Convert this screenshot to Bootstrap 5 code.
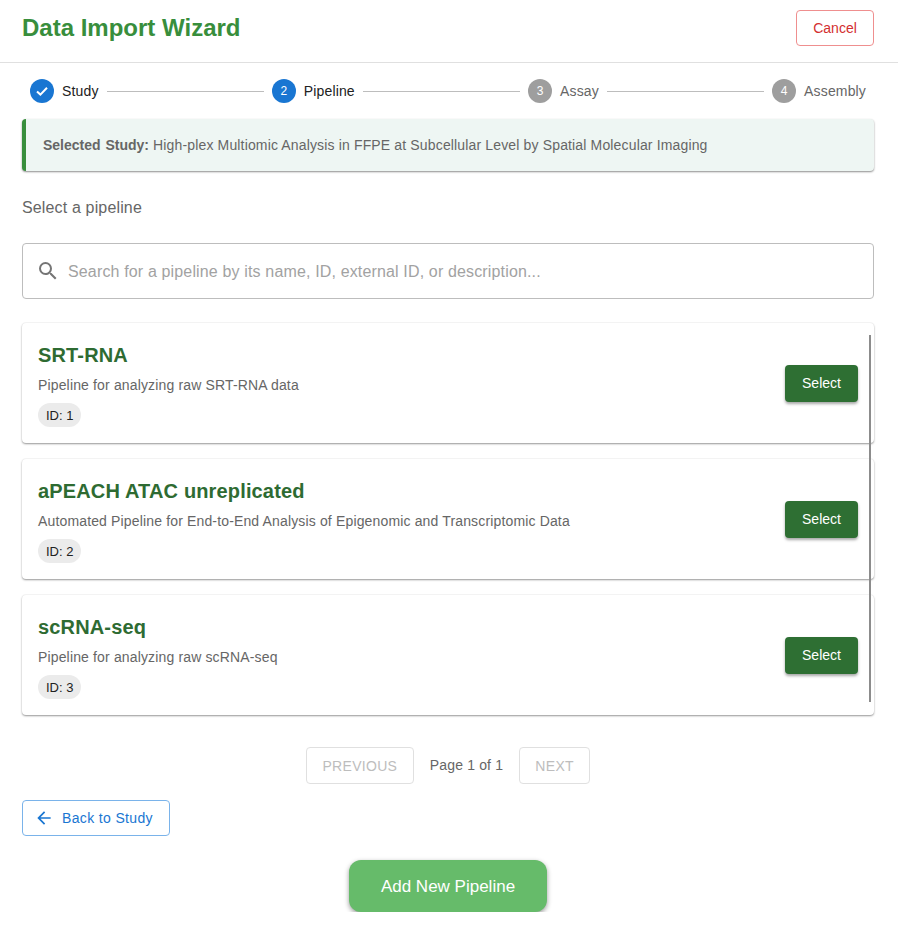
<!DOCTYPE html>
<html lang="en">
<head>
  <meta charset="UTF-8">
  <meta name="viewport" content="width=device-width,initial-scale=1">
  <title>Data Import Wizard</title>
  <link href="https://cdn.jsdelivr.net/npm/bootstrap@5.3.3/dist/css/bootstrap.min.css" rel="stylesheet">
  <style>
    body { background: #fff; font-family: "Liberation Sans", Arial, sans-serif; color: #666; font-size: 14px; letter-spacing: .15px; }
    .wiz-head { height: 63px; padding: 10px 24px 0 22px; border-bottom: 1px solid #e0e0e0; }
    .wiz-title { font-size: 24px; line-height: 36px; font-weight: 700; color: #388e3c; margin: 0; letter-spacing: 0; }
    .btn-cancel { width: 78px; height: 36px; padding: 0; font-size: 14px; line-height: 34px; color: #d32f2f; border: 1px solid #ef8f8f; border-radius: 4px; background: #fff; }
    .wiz-body { padding: 0 24px 0 22px; }
    .stepper { height: 56px; padding: 0 8px; }
    .step-dot { width: 24px; height: 24px; border-radius: 50%; font-size: 12px; letter-spacing: 0; color: #fff; background: #9e9e9e; flex: none; }
    .step-dot.on { background: #1976d2; }
    .step-text { margin-left: 8px; color: #666; white-space: nowrap; }
    .step-text.on { color: #212121; }
    .step-line { flex: 1; height: 1px; background: #bdbdbd; margin: 0 8px; }
    .study-box { height: 52px; padding-left: 17px; background: #eef6f3; border-left: 4px solid #388e3c; border-radius: 4px; box-shadow: 0 1px 2px rgba(0,0,0,.45); color: #666; }
    .study-box b { letter-spacing: 0; word-spacing: 1px; }
    .pick-label { font-size: 16px; line-height: 24px; margin: 25px 0 23px; color: #666; }
    .search-box { height: 56px; border: 1px solid #bdbdbd; border-radius: 4px; padding-left: 13px; }
    .search-box input { border: 0; outline: 0; flex: 1; font-size: 16px; letter-spacing: .15px; margin-left: 6px; padding-top: 3px; color: #333; background: transparent; font-family: inherit; }
    .search-box input::placeholder { color: #a2a2a2; opacity: 1; }
    .pipe-list { position: relative; margin-top: 24px; }
    .pipe-list .pipe-bar { position: absolute; right: 3px; top: 12px; bottom: 13px; width: 2px; background: #8c8c8c; }
    .pipe-item { height: 120px; margin-bottom: 16px; padding: 0 16px; border: 0; border-radius: 4px; box-shadow: 0 1px 2px rgba(0,0,0,.42), 0 -1px 1px rgba(0,0,0,.03); }
    .pipe-item:last-of-type { margin-bottom: 0; }
    .pipe-text { padding-top: 4px; }
    .pipe-name { font-size: 20px; line-height: 24px; font-weight: 700; color: #2e6b32; margin: 0 0 8px; }
    .pipe-desc { line-height: 20px; color: #666; margin: 0 0 8px; }
    .pipe-id { display: inline-block; height: 24px; line-height: 25px; padding: 0 8px; border-radius: 12px; background: #ebebeb; color: #212121; font-size: 13px; letter-spacing: 0; }
    .btn-pick { width: 73px; height: 37px; padding: 0 0 0; font-size: 14px; color: #fff; background: #2e6f33; border: 0; border-radius: 4px; box-shadow: 0 2px 3px rgba(0,0,0,.35); }
    .pager { margin-top: 32px; gap: 16px; }
    .btn-page { height: 37px; padding: 1px 0 0; font-size: 14px; letter-spacing: .3px; color: #bdbdbd; border: 1px solid #e0e0e0; border-radius: 4px; background: #fff; }
    .btn-page:disabled { color: #bdbdbd; border-color: #e0e0e0; opacity: 1; }
    .btn-back { width: 148px; height: 36px; margin-top: 16px; padding: 0 0 0 11px; font-size: 14px; letter-spacing: .35px; color: #1976d2; border: 1px solid #7ab3ea; border-radius: 4px; background: #fff; gap: 8px; }
    .btn-add { width: 198px; height: 52px; padding: 2px 0 0; font-size: 17px; letter-spacing: 0; color: #fff; background: #66bb6a; border: 0; border-radius: 12px; box-shadow: 0 2px 5px rgba(0,0,0,.4); }
    .add-row { margin-top: 24px; }
  </style>
</head>
<body>
<header class="wiz-head d-flex justify-content-between align-items-start">
  <h1 class="wiz-title">Data Import Wizard</h1>
  <button type="button" class="btn btn-cancel">Cancel</button>
</header>
<main class="wiz-body">
  <div class="stepper d-flex align-items-center">
    <span class="step-dot on d-flex align-items-center justify-content-center">
      <svg width="16" height="16" viewBox="0 0 16 16"><path d="M3 8.4l3.4 3.2L13 4.8" fill="none" stroke="#fff" stroke-width="2"/></svg>
    </span>
    <span class="step-text on">Study</span>
    <span class="step-line"></span>
    <span class="step-dot on d-flex align-items-center justify-content-center">2</span>
    <span class="step-text on">Pipeline</span>
    <span class="step-line"></span>
    <span class="step-dot d-flex align-items-center justify-content-center">3</span>
    <span class="step-text">Assay</span>
    <span class="step-line"></span>
    <span class="step-dot d-flex align-items-center justify-content-center">4</span>
    <span class="step-text">Assembly</span>
  </div>
  <div class="study-box d-flex align-items-center">
    <span><b>Selected Study:</b> High-plex Multiomic Analysis in FFPE at Subcellular Level by Spatial Molecular Imaging</span>
  </div>
  <p class="pick-label">Select a pipeline</p>
  <div class="search-box d-flex align-items-center">
    <svg width="24" height="24" viewBox="0 0 24 24" fill="#757575"><path d="M15.5 14h-.79l-.28-.27A6.47 6.47 0 0 0 16 9.5 6.5 6.5 0 1 0 9.5 16c1.61 0 3.09-.59 4.23-1.57l.27.28v.79l5 4.99L20.49 19l-4.99-5zm-6 0C7.01 14 5 11.99 5 9.5S7.01 5 9.5 5 14 7.01 14 9.5 11.99 14 9.5 14z"/></svg>
    <input type="text" placeholder="Search for a pipeline by its name, ID, external ID, or description...">
  </div>
  <div class="pipe-list">
    <div class="card pipe-item flex-row align-items-center justify-content-between">
      <div class="pipe-text">
        <h2 class="pipe-name">SRT-RNA</h2>
        <p class="pipe-desc">Pipeline for analyzing raw SRT-RNA data</p>
        <span class="pipe-id">ID: 1</span>
      </div>
      <button type="button" class="btn btn-pick">Select</button>
    </div>
    <div class="card pipe-item flex-row align-items-center justify-content-between">
      <div class="pipe-text">
        <h2 class="pipe-name">aPEACH ATAC unreplicated</h2>
        <p class="pipe-desc">Automated Pipeline for End-to-End Analysis of Epigenomic and Transcriptomic Data</p>
        <span class="pipe-id">ID: 2</span>
      </div>
      <button type="button" class="btn btn-pick">Select</button>
    </div>
    <div class="card pipe-item flex-row align-items-center justify-content-between">
      <div class="pipe-text">
        <h2 class="pipe-name">scRNA-seq</h2>
        <p class="pipe-desc">Pipeline for analyzing raw scRNA-seq</p>
        <span class="pipe-id">ID: 3</span>
      </div>
      <button type="button" class="btn btn-pick">Select</button>
    </div>
    <span class="pipe-bar"></span>
  </div>
  <div class="pager d-flex justify-content-center align-items-center">
    <button type="button" class="btn btn-page" style="width:108px" disabled>PREVIOUS</button>
    <span>Page 1 of 1</span>
    <button type="button" class="btn btn-page" style="width:71px" disabled>NEXT</button>
  </div>
  <button type="button" class="btn btn-back d-flex align-items-center">
    <svg width="20" height="20" viewBox="0 0 24 24" fill="#1976d2"><path d="M20 11H7.83l5.59-5.59L12 4l-8 8 8 8 1.41-1.41L7.83 13H20v-2z"/></svg>
    Back to Study
  </button>
  <div class="add-row d-flex justify-content-center">
    <button type="button" class="btn btn-add">Add New Pipeline</button>
  </div>
</main>
<script src="https://cdn.jsdelivr.net/npm/bootstrap@5.3.3/dist/js/bootstrap.bundle.min.js"></script>
</body>
</html>
